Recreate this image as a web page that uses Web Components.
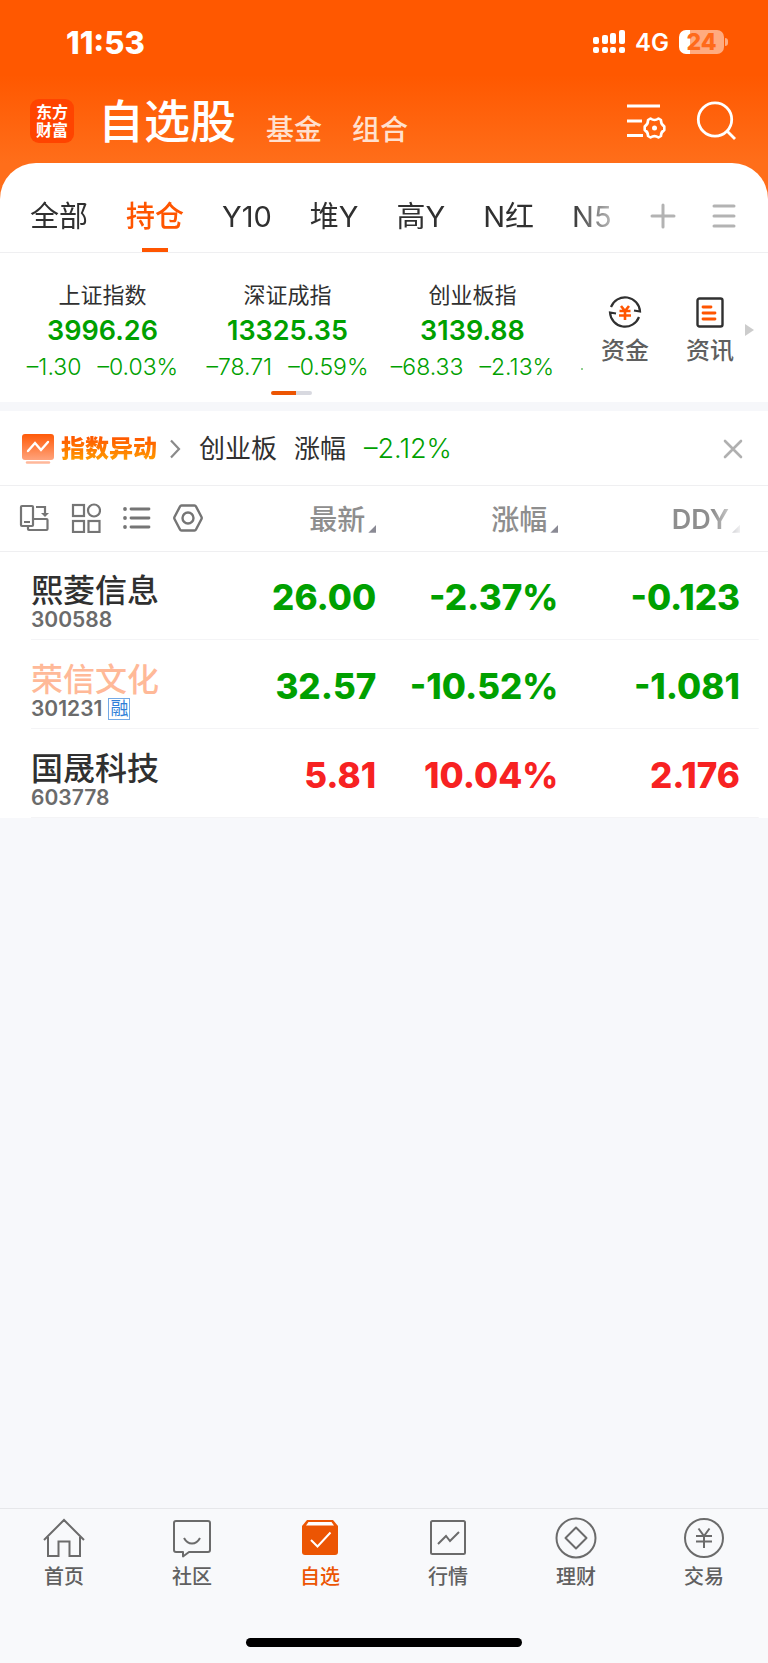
<!DOCTYPE html>
<html lang="zh-CN">
<head>
<meta charset="utf-8">
<meta name="viewport" content="width=device-width, initial-scale=1">
<title>自选股</title>
<style>
  body {
    margin: 0;
    min-height: 100vh;
    display: flex;
    flex-direction: column;
    background: #f7f8fb;
    color: #303030;
    font-family: Inter, "Noto Sans CJK SC", sans-serif;

    --brand: #ff5500;
    --up: #f72222;
    --down: #00a000;
    --line: #efeff1;
    --strip: #f6f7fa;
  }

  main {
    flex: 1;
  }
</style>
</head>
<body>
  <app-header>
    <status-bar slot="status" time="11:53" network="4G" battery="24"></status-bar>
    自选股
    <a slot="sections" href="#fund">基金</a>
    <a slot="sections" href="#portfolio">组合</a>
  </app-header>

  <main>
    <group-tabs>
      <a href="#all">全部</a>
      <a href="#hold" aria-current="page">持仓</a>
      <a href="#y10">Y10</a>
      <a href="#dui">堆Y</a>
      <a href="#gao">高Y</a>
      <a href="#hong">N红</a>
      <a href="#n5">N5</a>
    </group-tabs>

    <index-strip>
      <index-quote name="上证指数" value="3996.26" change="–1.30" percent="–0.03%"></index-quote>
      <index-quote name="深证成指" value="13325.35" change="–78.71" percent="–0.59%"></index-quote>
      <index-quote name="创业板指" value="3139.88" change="–68.33" percent="–2.13%"></index-quote>
      <quick-link slot="links" icon="funds">资金</quick-link>
      <quick-link slot="links" icon="news">资讯</quick-link>
    </index-strip>

    <index-alert label="指数异动" board="创业板" field="涨幅" percent="–2.12%"></index-alert>

    <stock-table></stock-table>
  </main>

  <tab-bar>
    <tab-item icon="home">首页</tab-item>
    <tab-item icon="community">社区</tab-item>
    <tab-item icon="watch" active>自选</tab-item>
    <tab-item icon="market">行情</tab-item>
    <tab-item icon="wealth">理财</tab-item>
    <tab-item icon="trade">交易</tab-item>
  </tab-bar>

<script>
/* Iconos: [ancho, alto, contenido] */
const ICONS = {
  signal: [32, 24, `
    <g fill="#fff">
      <rect x="0" y="7" width="6" height="7" rx="2"/><rect x="9" y="5" width="6" height="9" rx="2"/>
      <rect x="17" y="3" width="6" height="11" rx="2"/><rect x="26" y="0" width="6" height="14" rx="2"/>
      <rect x="0" y="17" width="6" height="6" rx="2"/><rect x="9" y="17" width="6" height="6" rx="2"/>
      <rect x="17" y="17" width="6" height="6" rx="2"/><rect x="26" y="17" width="6" height="6" rx="2"/>
    </g>`],
  manage: [40, 36, `
    <g fill="none" stroke="#fff" stroke-width="2.8">
      <path d="M1 3h33M1 18h15M1 32.500h16"/>
      <path stroke-width="2.6" stroke-linejoin="round" d="M24.500 15.500 Q28.500 18.500 32.500 15.500 L35 17 Q34.800 21.500 38.300 23.500 V27 Q34.800 29 35 33 L32.500 34.500 Q28.500 31.800 24.500 34.500 L22 33 Q22.200 29 18.700 27 V23.500 Q22.200 21.500 22 17 Z"/>
    </g>
    <circle cx="28.500" cy="25" r="2.500" fill="#fff"/>`],
  search: [40, 40, `
    <g fill="none" stroke="#fff" stroke-width="2.8">
      <circle cx="19" cy="18.500" r="16.700"/><path d="M30.500 29.500l8.500 8.500"/>
    </g>`],
  plus: [26, 26, `<path d="M13 2v22M2 13h22" stroke="#b3b3b3" stroke-width="3" stroke-linecap="round"/>`],
  menu: [24, 26, `<path d="M2 3h20M2 13h20M2 23h20" stroke="#b3b3b3" stroke-width="3" stroke-linecap="round"/>`],
  funds: [34, 34, `
    <g fill="none" stroke="#303030" stroke-width="2.200">
      <path d="M3 12A15 15 0 0 1 32 16.500L26 15.500"/>
      <path d="M31 22A15 15 0 0 1 2 17.500L8 18.500"/>
    </g>
    <path d="M13 11l4 5 4-5M11.500 16h11M11 20.500h12M17 16v9" fill="none" stroke="#ff5500" stroke-width="2.600"/>`],
  news: [34, 34, `
    <rect x="4.500" y="3.500" width="25" height="28" rx="2" fill="none" stroke="#303030" stroke-width="2.400"/>
    <path d="M10 12h8M10 18h12M10 24h12" stroke="#ff5500" stroke-width="2.800" stroke-linecap="round"/>`],
  alert: [34, 32, `
    <defs><linearGradient id="g" x1="0" y1="0" x2="0" y2="1">
      <stop offset="0" stop-color="#ff5a08"/><stop offset="1" stop-color="#ffa37c"/>
    </linearGradient></defs>
    <rect x="1" y="1" width="32" height="26" rx="3" fill="url(#g)"/>
    <path d="M7 18l7-8 6 7 7-8" fill="none" stroke="#fff" stroke-width="2.400" stroke-linecap="round"/>
    <path d="M6 29.500h22" stroke="#ffb89a" stroke-width="2.400" stroke-linecap="round"/>`],
  chevron: [12, 20, `<path d="M2 1.500l8 8.500-8 8.500" fill="none" stroke="#8a8a8a" stroke-width="2.200"/>`],
  close: [20, 20, `<path d="M2 2l16 16M18 2L2 18" stroke="#b0b0b0" stroke-width="2.600" stroke-linecap="round"/>`],
  rotate: [30, 28, `
    <g fill="none" stroke="#757575" stroke-width="2.200">
      <rect x="2" y="2" width="12" height="20" rx="1"/>
      <path d="M15 15h12.500q1 0 1 1v9q0 1-1 1H10q-1 0-1-1v-3"/>
      <path d="M17 3h9v6M5 18h6"/>
    </g>
    <path d="M22 9h8l-4 4z" fill="#757575"/>`],
  grid: [30, 30, `
    <g fill="none" stroke="#757575" stroke-width="2.200">
      <rect x="2" y="2" width="11" height="11"/><circle cx="23" cy="7.500" r="6"/>
      <rect x="2" y="18" width="11" height="11"/><rect x="17.500" y="18" width="11" height="11"/>
    </g>`],
  list: [28, 24, `
    <path d="M8 3h18M8 12h18M8 21h18" stroke="#757575" stroke-width="2.800" stroke-linecap="round"/>
    <g fill="#757575"><circle cx="2" cy="3" r="1.900"/><circle cx="2" cy="12" r="1.900"/><circle cx="2" cy="21" r="1.900"/></g>`],
  nut: [30, 28, `
    <g fill="none" stroke="#757575" stroke-width="2.400" stroke-linejoin="round">
      <path d="M8.500 1.500h13q1 0 1.500 1L28.500 13q.5 1 0 2L23 25.500q-.5 1-1.500 1h-13q-1 0-1.500-1L1.500 15q-.5-1 0-2L7 2.500q.5-1 1.500-1z"/>
      <circle cx="15" cy="14" r="5.500"/>
    </g>`],
  home: [44, 42, `
    <path d="M2 23L22 3l20 20M6 20v19h10.500V24.500h11V39H38V20" fill="none" stroke="#6b6b6b" stroke-width="2"/>`],
  community: [44, 42, `
    <g fill="none" stroke="#6b6b6b" stroke-width="2" stroke-linejoin="round">
      <path d="M6 4h32q2 0 2 2v27q0 2-2 2H19l-6 4.500V35H6q-2 0-2-2V6q0-2 2-2z"/>
      <path d="M14 21q3 5.500 8 5.500t8-5.500"/>
    </g>`],
  watch: [44, 42, `
    <path d="M4 9L9 3h26l5 6v26q0 3-3 3H7q-3 0-3-3z" fill="#ec5503"/>
    <path d="M10.500 5h23l2.500 3.500H8z" fill="#fff"/>
    <path d="M13 23l6.500 6.500 13-14" fill="none" stroke="#fff" stroke-width="2"/>`],
  market: [44, 42, `
    <rect x="5" y="4" width="34" height="33" rx="1.500" fill="none" stroke="#6b6b6b" stroke-width="2"/>
    <path d="M12 27l8-8 4 5 9-9" fill="none" stroke="#6b6b6b" stroke-width="2"/>`],
  wealth: [44, 42, `
    <circle cx="22" cy="21" r="19.500" fill="none" stroke="#6b6b6b" stroke-width="2"/>
    <path d="M22 10.500L32.500 21 22 31.500 11.500 21z" fill="none" stroke="#6b6b6b" stroke-width="2" stroke-linejoin="round"/>`],
  trade: [44, 42, `
    <circle cx="22" cy="21" r="19" fill="none" stroke="#6b6b6b" stroke-width="2"/>
    <path d="M16.500 11.500l5.500 7.500 5.500-7.500M14 19h16M14 24.500h16M22 19v12" fill="none" stroke="#6b6b6b" stroke-width="2"/>`],
};

const STOCKS = [
  { name: "熙菱信息", code: "300588", price: "26.00", percent: "-2.37%", ddy: "-0.123", trend: "down" },
  { name: "荣信文化", code: "301231", price: "32.57", percent: "-10.52%", ddy: "-1.081", trend: "down", seen: true, tag: "融" },
  { name: "国晟科技", code: "603778", price: "5.81", percent: "10.04%", ddy: "2.176", trend: "up" },
];

/* Base comun: adjunta el shadow root y pinta estilos + contenido */
class BaseElement extends HTMLElement {
  constructor() {
    super();
    this.attachShadow({ mode: "open" });
  }

  connectedCallback() {
    this.shadowRoot.innerHTML = /*html*/ `
      <style>
        *, ::before, ::after { box-sizing: border-box; }
        a { color: inherit; text-decoration: none; }
        button {
          display: flex;
          padding: 0;
          border: 0;
          background: none;
          cursor: pointer;
        }
        ${this.constructor.styles}
      </style>
      ${this.render()}`;
  }

  attr(name) {
    return this.getAttribute(name) || "";
  }
}

class AppIcon extends BaseElement {
  static get styles() {
    return /*css*/ `
      :host { display: inline-flex; flex: none; }
      svg { display: block; }
    `;
  }

  render() {
    const [width, height, body] = ICONS[this.attr("name")];
    return `<svg width="${width}" height="${height}" viewBox="0 0 ${width} ${height}" aria-hidden="true">${body}</svg>`;
  }
}

class StatusBar extends BaseElement {
  static get styles() {
    return /*css*/ `
      :host {
        display: flex;
        justify-content: space-between;
        align-items: center;
        height: 84px;
        padding: 0 40px 0 66px;
        color: #fff;
      }
      time { font-size: 31px; font-weight: 800; }
      .right { display: flex; align-items: center; gap: 10px; }
      .network { font-size: 24px; font-weight: 600; }
      .battery { display: flex; align-items: center; gap: 1px; }
      .level {
        width: 45px;
        height: 24px;
        border-radius: 7px;
        background: linear-gradient(90deg, #fff var(--charge), #ffab80 var(--charge));
        color: #ff6a1a;
        font-size: 23px;
        font-weight: 800;
        line-height: 24px;
        text-align: center;
      }
      .cap { width: 3px; height: 8px; border-radius: 0 3px 3px 0; background: #ffab80; }
    `;
  }

  render() {
    return /*html*/ `
      <time>${this.attr("time")}</time>
      <div class="right">
        <app-icon name="signal"></app-icon>
        <span class="network">${this.attr("network")}</span>
        <div class="battery" style="--charge: ${this.attr("battery")}%">
          <span class="level">${this.attr("battery")}</span><i class="cap"></i>
        </div>
      </div>`;
  }
}

class AppHeader extends BaseElement {
  static get styles() {
    return /*css*/ `
      :host {
        display: block;
        margin-bottom: -37px;
        padding-bottom: 37px;
        background: linear-gradient(#ff5800 75px, #ff6e1a 163px);
        color: #fff;
      }
      .bar {
        display: flex;
        align-items: center;
        height: 79px;
        padding: 0 32px 6px 30px;
      }
      .logo {
        display: grid;
        place-content: center;
        width: 44px;
        height: 44px;
        border-radius: 9px;
        background: #ff4400;
        font-size: 16px;
        font-weight: 700;
        line-height: 18px;
        text-align: center;
      }
      .titles { display: flex; align-items: flex-end; flex: 1; margin-left: 24px; }
      h1 { margin: 0; font-size: 46px; font-weight: 500; line-height: 60px; }
      nav { display: flex; gap: 30px; margin-left: 30px; }
      ::slotted(a) {
        color: #ffe0cf;
        font-size: 28px;
        font-weight: 500;
        line-height: 42px;
        text-decoration: none;
      }
      .actions { display: flex; align-items: center; gap: 30px; }
    `;
  }

  render() {
    return /*html*/ `
      <slot name="status"></slot>
      <div class="bar">
        <span class="logo">东方<br>财富</span>
        <div class="titles">
          <h1><slot></slot></h1>
          <nav><slot name="sections"></slot></nav>
        </div>
        <div class="actions">
          <button aria-label="管理"><app-icon name="manage"></app-icon></button>
          <button aria-label="搜索"><app-icon name="search"></app-icon></button>
        </div>
      </div>`;
  }
}

class GroupTabs extends BaseElement {
  static get styles() {
    return /*css*/ `
      :host {
        display: flex;
        align-items: center;
        justify-content: space-between;
        height: 89px;
        padding: 0 32px 0 30px;
        border-bottom: 1px solid var(--line);
        border-radius: 36px 36px 0 0;
        background: #fff;
      }
      nav {
        display: flex;
        align-self: stretch;
        gap: 38px;
        padding-top: 32px;
        -webkit-mask: linear-gradient(90deg, #000 93%, #0005);
        mask: linear-gradient(90deg, #000 93%, #0005);
      }
      ::slotted(a) {
        color: #303030;
        font-size: 29px;
        font-weight: 400;
        line-height: 44px;
        text-decoration: none;
        white-space: nowrap;
      }
      ::slotted(a[aria-current]) {
        background: linear-gradient(var(--brand), var(--brand)) center bottom / 26px 4px no-repeat;
        color: var(--brand);
        font-weight: 500;
      }
      .tools { display: flex; align-items: center; gap: 36px; padding-top: 16px; }
    `;
  }

  render() {
    return /*html*/ `
      <nav><slot></slot></nav>
      <div class="tools">
        <button aria-label="添加分组"><app-icon name="plus"></app-icon></button>
        <button aria-label="全部分组"><app-icon name="menu"></app-icon></button>
      </div>`;
  }
}

class IndexQuote extends BaseElement {
  static get styles() {
    return /*css*/ `
      :host {
        display: flex;
        flex-direction: column;
        align-items: center;
        flex: 1;
        white-space: nowrap;
      }
      .name { font-size: 22px; line-height: 36px; }
      .value { color: var(--down); font-size: 27px; font-weight: 600; line-height: 36px; }
      .change { display: flex; gap: 16px; color: var(--down); font-size: 23px; font-weight: 300; line-height: 37px; }
    `;
  }

  render() {
    return /*html*/ `
      <span class="name">${this.attr("name")}</span>
      <span class="value">${this.attr("value")}</span>
      <span class="change"><span>${this.attr("change")}</span><span>${this.attr("percent")}</span></span>`;
  }
}

class QuickLink extends BaseElement {
  static get styles() {
    return /*css*/ `
      :host { display: block; }
      a {
        display: flex;
        flex-direction: column;
        align-items: center;
        gap: 4px;
        color: #5f5f5f;
        font-size: 24px;
        font-weight: 500;
        line-height: 36px;
      }
    `;
  }

  render() {
    return /*html*/ `<a href="#${this.attr("icon")}"><app-icon name="${this.attr("icon")}"></app-icon><slot></slot></a>`;
  }
}

class IndexStrip extends BaseElement {
  static get styles() {
    return /*css*/ `
      :host {
        display: flex;
        align-items: flex-start;
        padding: 24px 14px 7px 0;
        border-bottom: 9px solid var(--strip);
        background: #fff;
      }
      .quotes { flex: 1; }
      .row { display: flex; padding-left: 10px; }
      /* Borde visible de la siguiente tarjeta del carrusel */
      .row::after { content: ""; align-self: flex-end; width: 2px; height: 2px; margin: 0 0 16px 16px; background: #8fd08f; }
      .pager {
        width: 41px;
        height: 4px;
        margin: 5px auto 0;
        border-radius: 2px;
        background: linear-gradient(90deg, #ec5503 60%, #d8d9e0 60%);
      }
      .links { display: flex; gap: 37px; margin: 18px 11px 0 18px; }
      .next { width: 9px; height: 12px; margin-top: 47px; background: #ccc; clip-path: polygon(0 0, 100% 50%, 0 100%); }
    `;
  }

  render() {
    return /*html*/ `
      <div class="quotes">
        <div class="row"><slot></slot></div>
        <div class="pager"></div>
      </div>
      <div class="links"><slot name="links"></slot></div>
      <i class="next"></i>`;
  }
}

class IndexAlert extends BaseElement {
  static get styles() {
    return /*css*/ `
      :host {
        display: flex;
        align-items: center;
        height: 73px;
        padding: 1px 25px 0 21px;
        border-bottom: 1px solid var(--line);
        background: #fff;
        font-size: 26px;
        line-height: 36px;
      }
      a { display: flex; align-items: center; }
      strong {
        margin: 0 12px 0 6px;
        background: linear-gradient(#ff5a00 20%, #ffa000 85%);
        -webkit-background-clip: text;
        background-clip: text;
        color: transparent;
        font-size: 24px;
        font-weight: 900;
      }
      .board { margin: 0 17px 0 18px; }
      .percent { flex: 1; margin-left: 18px; color: var(--down); font-size: 27px; font-weight: 300; }
    `;
  }

  render() {
    return /*html*/ `
      <a href="#alerts">
        <app-icon name="alert"></app-icon>
        <strong>${this.attr("label")}</strong>
        <app-icon name="chevron"></app-icon>
      </a>
      <span class="board">${this.attr("board")}</span>
      <span>${this.attr("field")}</span>
      <span class="percent">${this.attr("percent")}</span>
      <button aria-label="关闭"><app-icon name="close"></app-icon></button>`;
  }
}

class StockTable extends BaseElement {
  static get styles() {
    return /*css*/ `
      :host { display: block; background: #fff; }
      table { width: 100%; border-collapse: collapse; table-layout: fixed; }
      th, td { padding: 0; text-align: right; }
      .name { width: 26%; text-align: left; }
      .price { width: 23%; }
      .percent { width: 182px; }
      .ddy { padding-right: 28px; }

      thead tr { height: 65px; border-bottom: 1px solid var(--line); }
      .views { display: flex; align-items: center; gap: 22px; padding-left: 19px; }
      .sort {
        display: inline-flex;
        align-items: flex-end;
        gap: 3px;
        padding-top: 3px;
        color: #8e8e8e;
        font: inherit;
        font-size: 28px;
        font-weight: 500;
        line-height: 40px;
      }
      .sort::after {
        content: "";
        width: 8px;
        height: 8px;
        margin-bottom: 7px;
        background: #8a8a94;
        clip-path: polygon(100% 0, 100% 100%, 0 100%);
      }
      .ddy .sort {
        font-size: 27px;
        font-weight: 600;
        -webkit-mask: linear-gradient(90deg, #000 60%, #0002);
        mask: linear-gradient(90deg, #000 60%, #0002);
      }

      tbody tr { height: 89px; background: linear-gradient(#f4f4f6, #f4f4f6) 31px 100% / calc(100% - 40px) 1px no-repeat; }
      tbody td { padding-top: 2px; }
      tbody .name { padding: 12px 0 0 31px; font-weight: 500; }
      .title { display: block; color: #303030; font-size: 32px; line-height: 36px; white-space: nowrap; }
      .seen .title { color: #ffb998; }
      .code { display: flex; align-items: center; gap: 6px; color: #6b6b6b; font-size: 21px; font-weight: 600; line-height: 22px; }
      .tag {
        width: 22px;
        height: 22px;
        border: 1px solid #73a9e6;
        color: #2f7fd8;
        font-size: 18px;
        font-weight: 400;
        line-height: 20px;
        text-align: center;
      }
      .number { font-size: 35px; font-weight: 800; line-height: 44px; }
      .up .number { color: var(--up); }
      .down .number { color: var(--down); }
    `;
  }

  renderRow(stock) {
    return /*html*/ `
      <tr class="${stock.trend} ${stock.seen ? "seen" : ""}">
        <td class="name">
          <span class="title">${stock.name}</span>
          <span class="code">${stock.code}${stock.tag ? `<span class="tag">${stock.tag}</span>` : ""}</span>
        </td>
        <td class="number">${stock.price}</td>
        <td class="number">${stock.percent}</td>
        <td class="number ddy">${stock.ddy}</td>
      </tr>`;
  }

  render() {
    return /*html*/ `
      <table>
        <thead>
          <tr>
            <th class="name">
              <div class="views">
                <button aria-label="横屏"><app-icon name="rotate"></app-icon></button>
                <button aria-label="宫格"><app-icon name="grid"></app-icon></button>
                <button aria-label="列表"><app-icon name="list"></app-icon></button>
                <button aria-label="设置"><app-icon name="nut"></app-icon></button>
              </div>
            </th>
            <th class="price"><button class="sort">最新</button></th>
            <th class="percent"><button class="sort">涨幅</button></th>
            <th class="ddy"><button class="sort">DDY</button></th>
          </tr>
        </thead>
        <tbody>${STOCKS.map((stock) => this.renderRow(stock)).join("")}</tbody>
      </table>`;
  }
}

class TabItem extends BaseElement {
  static get styles() {
    return /*css*/ `
      :host { display: block; flex: 1; color: #606060; }
      :host([active]) { color: #ec5503; }
      a {
        display: flex;
        flex-direction: column;
        align-items: center;
        gap: 4px;
        font-size: 20px;
        font-weight: 500;
        line-height: 28px;
      }
    `;
  }

  render() {
    return /*html*/ `<a href="#${this.attr("icon")}"><app-icon name="${this.attr("icon")}"></app-icon><slot></slot></a>`;
  }
}

class TabBar extends BaseElement {
  static get styles() {
    return /*css*/ `
      :host { display: block; border-top: 1px solid #e6e7ea; background: #f8f9fb; }
      nav { display: flex; padding-top: 8px; }
      .indicator { width: 36%; height: 9px; margin: 47px auto 16px; border-radius: 5px; background: #000; }
    `;
  }

  render() {
    return /*html*/ `<nav><slot></slot></nav><div class="indicator"></div>`;
  }
}

customElements.define("app-icon", AppIcon);
customElements.define("status-bar", StatusBar);
customElements.define("app-header", AppHeader);
customElements.define("group-tabs", GroupTabs);
customElements.define("index-quote", IndexQuote);
customElements.define("quick-link", QuickLink);
customElements.define("index-strip", IndexStrip);
customElements.define("index-alert", IndexAlert);
customElements.define("stock-table", StockTable);
customElements.define("tab-item", TabItem);
customElements.define("tab-bar", TabBar);
</script>
</body>
</html>
